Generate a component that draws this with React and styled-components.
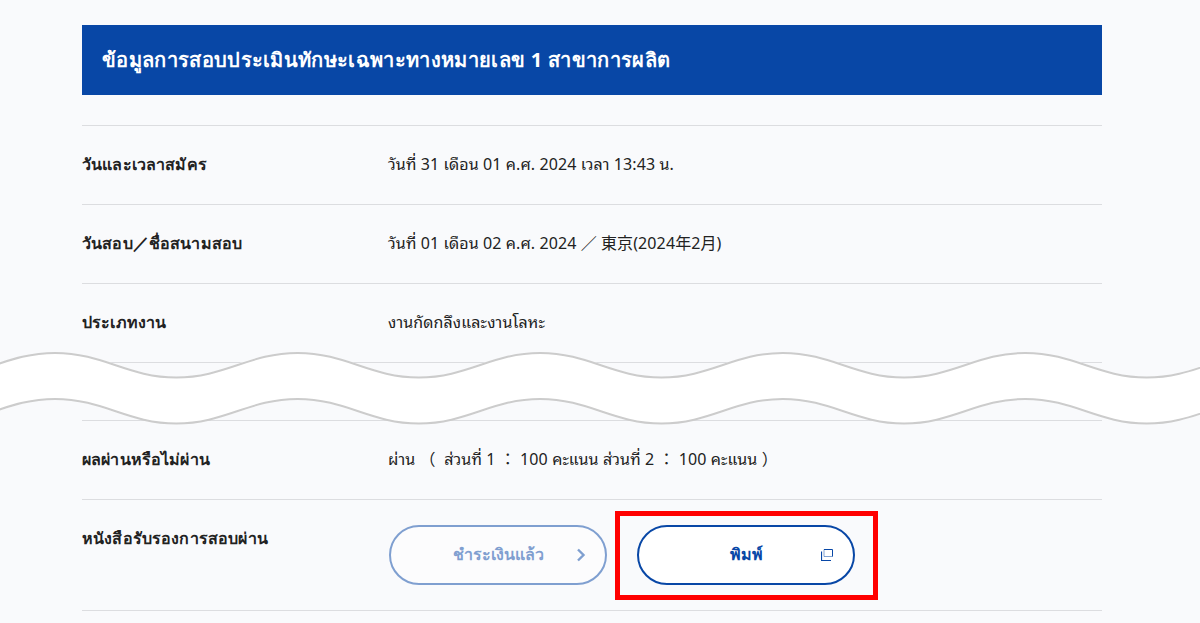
import React from 'react';
import styled, { createGlobalStyle } from 'styled-components';

const GlobalStyle = createGlobalStyle`
  html, body {
    margin: 0;
    padding: 0;
    background: #f9fafc;
  }
  body {
    font-family: "Noto Sans", sans-serif;
    color: #222;
  }
`;

const Page = styled.div`
  position: relative;
  width: 1200px;
  height: 623px;
  overflow: hidden;
  box-sizing: border-box;
  padding: 25px 98px 0 82px;
`;

const Heading = styled.h2`
  margin: 0 0 30px;
  height: 70px;
  padding: 0 20px;
  display: flex;
  align-items: center;
  background: #0847a6;
  color: #fff;
  font-size: 20px;
  font-weight: 700;
  letter-spacing: 0.32px;
`;

const Row = styled.div`
  display: flex;
  box-sizing: border-box;
  height: ${(props) => props.height || 79}px;
  padding-top: 27px;
  border-top: 1px solid #dcdde0;
  font-size: 16px;
  line-height: 22px;
`;

const LastLine = styled.div`
  border-top: 1px solid #dcdde0;
`;

const Label = styled.div`
  width: 306px;
  font-weight: 700;
  letter-spacing: 0.15px;
`;

const Value = styled.div`
  flex: 1;
  font-family: "Noto Sans", "Noto Sans Thai Looped", "Noto Sans CJK JP", sans-serif;
  letter-spacing: 0.1px;
  white-space: pre;
`;

const Buttons = styled.div`
  display: flex;
  gap: 30px;
  margin: -2px 0 0 1px;
`;

const Pill = styled.div`
  position: relative;
  width: 218px;
  height: 60px;
  box-sizing: border-box;
  padding-bottom: 2px;
  display: flex;
  align-items: center;
  justify-content: center;
  background: #fff;
  border: 2px solid #0847a6;
  border-radius: 30px;
  color: #0847a6;
  font-size: 16px;
  font-weight: 700;
  opacity: ${(props) => (props.$faded ? 0.5 : 1)};
`;

const PillIcon = styled.svg`
  position: absolute;
  right: ${(props) => props.$right}px;
  top: 50%;
  transform: translateY(-50%);
`;

const Highlight = styled.div`
  position: absolute;
  left: 615px;
  top: 511px;
  width: 263px;
  height: 89px;
  box-sizing: border-box;
  border: 5px solid #f00;
`;

const WaveLayer = styled.svg`
  position: absolute;
  left: 0;
  top: 340px;
`;

// one wave line across the page, peaks every 243px
const wavePath = (base) => {
  const period = 242.6;
  const half = period / 2;
  const h = half * 0.4;
  const amp = 24.5;
  let x = 55 - period;
  let up = true;
  let d = `M${x} ${base}`;
  while (x < 1300) {
    const from = up ? base : base + amp;
    const to = up ? base + amp : base;
    d += ` C${x + h} ${from} ${x + half - h} ${to} ${x + half} ${to}`;
    x += half;
    up = !up;
  }
  return d;
};

function Wave() {
  return (
    <WaveLayer width="1200" height="90" viewBox="0 0 1200 90">
      <path d={wavePath(36)} fill="none" stroke="#fff" strokeWidth="46" />
      <path d={wavePath(13)} fill="none" stroke="#cccccc" strokeWidth="2" />
      <path d={wavePath(59)} fill="none" stroke="#cccccc" strokeWidth="2" />
    </WaveLayer>
  );
}

export default function App() {
  return (
    <>
      <GlobalStyle />
      <Page>
        <Heading>ข้อมูลการสอบประเมินทักษะเฉพาะทางหมายเลข 1 สาขาการผลิต</Heading>
        <Row>
          <Label>วันและเวลาสมัคร</Label>
          <Value>วันที่ 31 เดือน 01 ค.ศ. 2024 เวลา 13:43 น.</Value>
        </Row>
        <Row>
          <Label>วันสอบ／ชื่อสนามสอบ</Label>
          <Value>วันที่ 01 เดือน 02 ค.ศ. 2024 ／ 東京(2024年2月)</Value>
        </Row>
        <Row>
          <Label>ประเภทงาน</Label>
          <Value>งานกัดกลึงและงานโลหะ</Value>
        </Row>
        <Row height={58} />
        <Row>
          <Label>ผลผ่านหรือไม่ผ่าน</Label>
          <Value>ผ่าน （  ส่วนที่ 1 ： 100 คะแนน ส่วนที่ 2 ： 100 คะแนน ）</Value>
        </Row>
        <Row height={111}>
          <Label>หนังสือรับรองการสอบผ่าน</Label>
          <Buttons>
            <Pill $faded>
              ชำระเงินแล้ว
              <PillIcon $right={17} width="12" height="14" viewBox="0 0 12 14">
                <path d="M2 1.5l5.5 5.5-5.5 5.5" fill="none" stroke="#0847a6" strokeWidth="2.4" />
              </PillIcon>
            </Pill>
            <Pill>
              พิมพ์
              <PillIcon $right={20} width="12" height="12" viewBox="0 0 12 12">
                <path d="M3 .5h8.5v7" fill="none" stroke="#0847a6" strokeWidth="1" />
                <path d="M3 .5v7h8.5" fill="none" stroke="#0847a6" strokeWidth="1" opacity=".5" />
                <path d="M.5 2.5v9H10" fill="none" stroke="#0847a6" strokeWidth="1.2" />
              </PillIcon>
            </Pill>
          </Buttons>
        </Row>
        <LastLine />
        <Wave />
        <Highlight />
      </Page>
    </>
  );
}
